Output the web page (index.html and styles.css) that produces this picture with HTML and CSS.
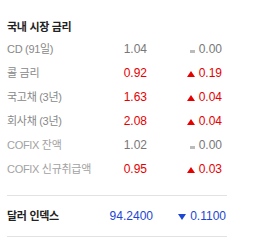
FILE: index.html
```html
<!DOCTYPE html>
<html lang="ko">
<head>
  <meta charset="UTF-8">
  <title>시장 금리</title>
  <link rel="stylesheet" href="styles.css">
</head>
<body>
  <div class="panel">
    <h3 class="title">국내 시장 금리</h3>

    <div class="rates">
      <div class="row">
        <span class="name">CD (91일)</span>
        <span class="value same">1.04</span>
        <span class="change same"><i class="mark flat"></i>0.00</span>
      </div>
      <div class="row">
        <span class="name">콜 금리</span>
        <span class="value up">0.92</span>
        <span class="change up"><i class="mark rise"></i>0.19</span>
      </div>
      <div class="row">
        <span class="name">국고채 (3년)</span>
        <span class="value up">1.63</span>
        <span class="change up"><i class="mark rise"></i>0.04</span>
      </div>
      <div class="row">
        <span class="name">회사채 (3년)</span>
        <span class="value up">2.08</span>
        <span class="change up"><i class="mark rise"></i>0.04</span>
      </div>
      <div class="row">
        <span class="name light">COFIX 잔액</span>
        <span class="value same">1.02</span>
        <span class="change same"><i class="mark flat"></i>0.00</span>
      </div>
      <div class="row">
        <span class="name light">COFIX 신규취급액</span>
        <span class="value up">0.95</span>
        <span class="change up"><i class="mark rise"></i>0.03</span>
      </div>
    </div>

    <div class="dollar">
      <span class="name strong">달러 인덱스</span>
      <span class="value down">94.2400</span>
      <span class="change down"><i class="mark fall"></i>0.1100</span>
    </div>
  </div>
</body>
</html>
```

FILE: styles.css
```css
body {
  margin: 0;
  padding: 0;
  background-color: #fff;
  font-family: "Liberation Sans", "Noto Sans CJK KR", sans-serif;
  font-size: 12px;
  color: #777;
}

.panel {
  width: 220px;
  padding: 17px 0 0 7px;
}

.title {
  margin: 0;
  font-size: 11px;
  letter-spacing: -0.3px;
  line-height: 20px;
  font-weight: bold;
  color: #222;
}

.row {
  display: grid;
  grid-template-columns: minmax(0, 1fr) 48px 75px;
  padding-right: 5px;
  height: 24px;
  line-height: 24px;
}

.name {
  font-size: 11px;
  letter-spacing: -0.3px;
  color: #888;
  white-space: nowrap;
}

.name.light {
  color: #a2a2a2;
}

.name.strong {
  color: #222;
  font-weight: bold;
}

.value,
.change {
  text-align: right;
}

.same {
  color: #777;
}

.up {
  color: #e60000;
}

.down {
  color: #1e46d2;
}

/* 등락 표시 */
.mark {
  display: inline-block;
  margin-right: 4px;
  vertical-align: middle;
}

.mark.flat {
  width: 5px;
  height: 3px;
  background-color: #bbb;
  margin-top: 4px;
}

.mark.rise {
  width: 0;
  height: 0;
  border-left: 4px solid transparent;
  border-right: 4px solid transparent;
  border-bottom: 6px solid #e60000;
}

.mark.fall {
  width: 0;
  height: 0;
  border-left: 4px solid transparent;
  border-right: 4px solid transparent;
  border-top: 6px solid #1e46d2;
}

.dollar {
  display: grid;
  grid-template-columns: minmax(0, 1fr) 50px 73px;
  padding-right: 1px;
  margin-top: 14px;
  height: 40px;
  line-height: 40px;
  border-top: 1px solid #e2e2e2;
  border-bottom: 1px solid #e2e2e2;
}
```
